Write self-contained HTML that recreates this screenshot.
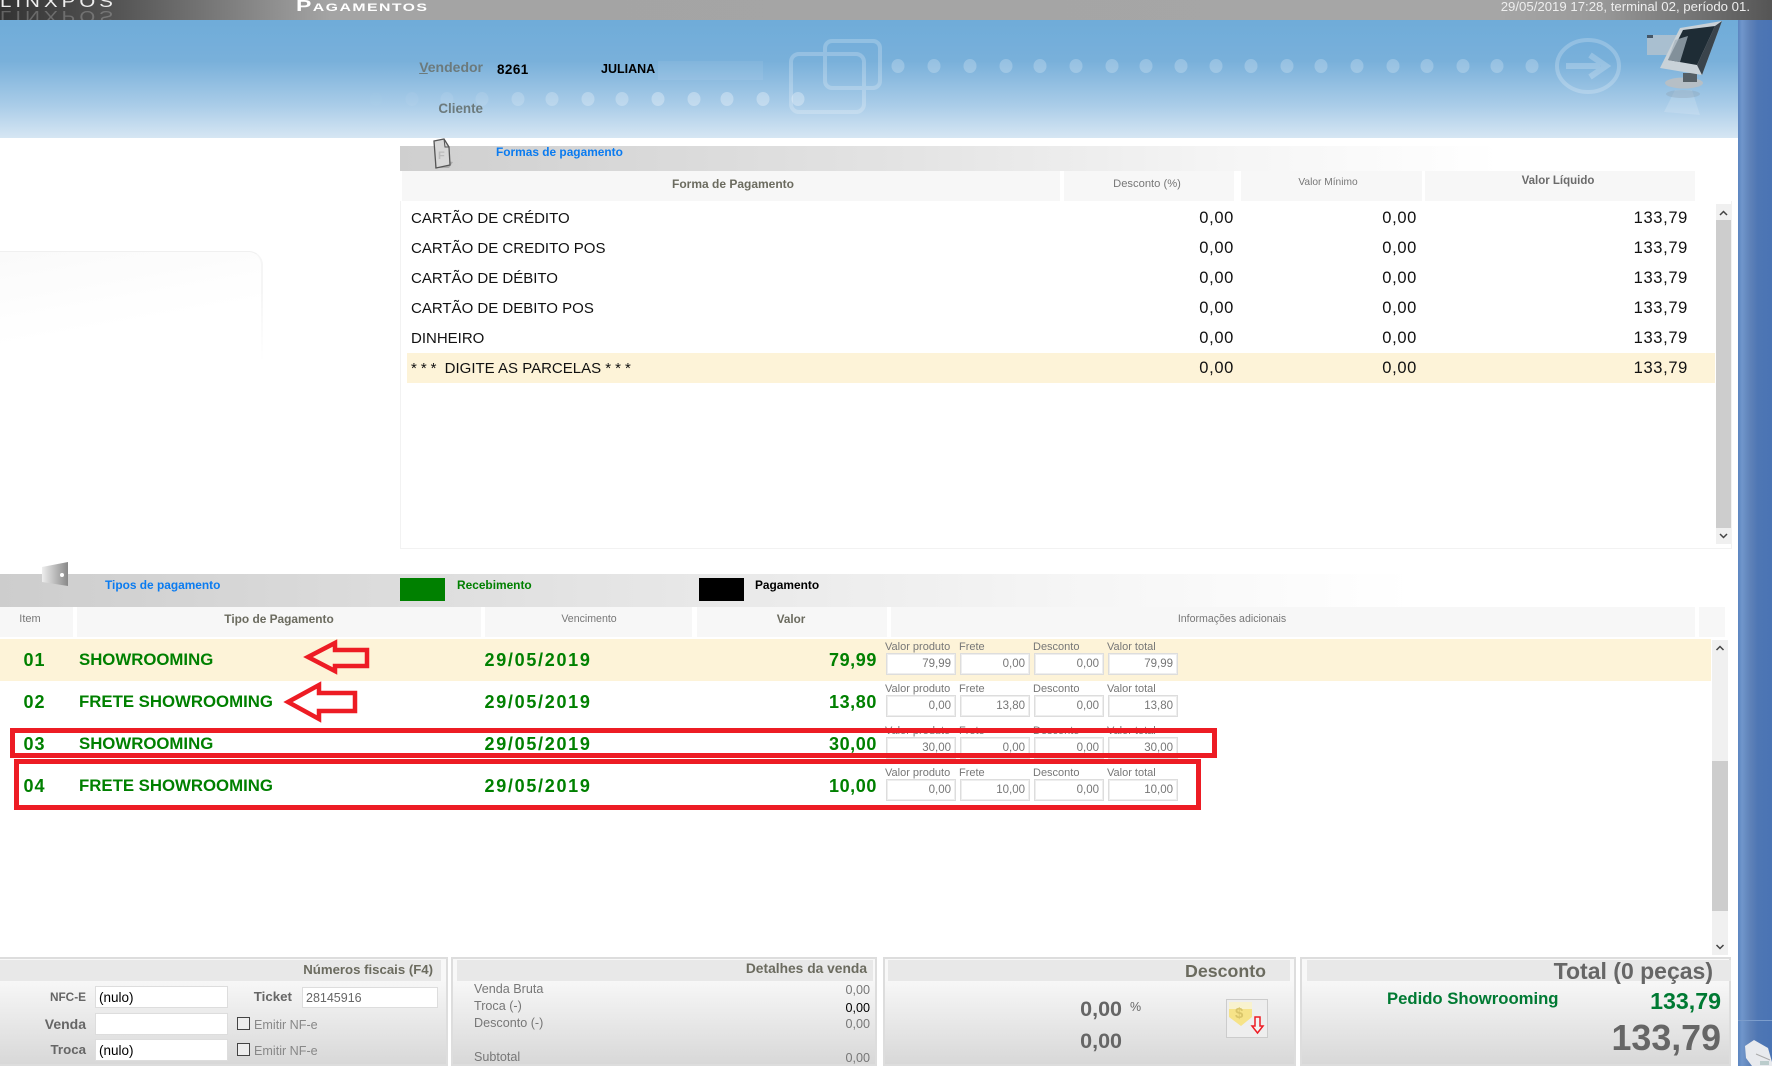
<!DOCTYPE html>
<html lang="pt"><head><meta charset="utf-8"><title>Pagamentos</title>
<style>
html,body{margin:0;padding:0;background:#fff}
#p{position:relative;width:1772px;height:1066px;overflow:hidden;background:#fff;font-family:"Liberation Sans",sans-serif}
#p div{position:absolute}
.t{white-space:nowrap;line-height:1}
.b{font-weight:bold}
.r16{font-size:15px;color:#111}
.n{font-size:16.5px;letter-spacing:.65px;color:#111}
.g{font-size:16.8px;font-weight:bold;color:#008000}
.gd{font-size:18px;font-weight:bold;color:#008000;letter-spacing:1.7px}
.gv{font-size:18px;font-weight:bold;color:#008000;letter-spacing:.6px}
.gi{font-size:18px;font-weight:bold;color:#008000;letter-spacing:1px}
.h{background:#f7f7f7;top:171px;height:30px}
.h2{background:#f7f7f7;top:607px;height:30px}
.c{transform:translateX(-50%)}
.l{font-size:11px;color:#777}
.i{width:68px;height:20px;border:1px solid #ddd;box-shadow:inset 0 0 0 1px #eee;background:#fff}
.v{font-size:11.5px;color:#777}
.pn{top:957px;height:105px;border:2px solid #ddd;background:linear-gradient(#f8f8f8 20px,#d8d8d8)}
.ph{top:960px;height:21px;background:#e8e8e8}
.in{background:#fff;border:1px solid #ddd;box-sizing:border-box}
.lb{font-size:13.3px;font-weight:bold;color:#666}
.sm{font-size:12.6px;color:#777}
.ck{width:11px;height:11px;border:1px solid #444;background:#eee}
</style></head><body><div id="p">

<div style="left:0;top:0;width:1772px;height:20px;background:linear-gradient(90deg,#333 0,#555 120px,#a4a4a4 330px,#a6a6a6 1500px,#999 1600px,#555 1772px)"></div>
<div class="t" style="left:0;top:-7px;font-size:17px;letter-spacing:3.4px;color:#eee;transform:scaleX(1.2);transform-origin:0 0">LINXPOS</div>
<div class="t" style="left:0;top:8px;font-size:17px;letter-spacing:3.4px;color:#bbb;opacity:.35;transform:scaleX(1.2) scaleY(-1);transform-origin:0 50%">LINXPOS</div>
<div class="t b" style="left:296px;top:-1px;font-size:16px;letter-spacing:1px;color:#fff;font-variant:small-caps;transform:scaleX(1.44);transform-origin:0 0">Pagamentos</div>
<div class="t" style="right:22px;top:0;font-size:13.2px;color:#eee">29/05/2019 17:28, terminal 02, período 01.</div>

<div style="left:0;top:20px;width:1738px;height:118px;background:linear-gradient(#6facd9,#79b0da 35%,#a9cce8 72%,#d6e6f3)"></div>
<div style="left:1738px;top:20px;width:34px;height:1046px;background:linear-gradient(90deg,#5b85c0 0,#7096cb 4px,#5f82b8 12px,#4e76b4 20px,#4a74b4)"></div>
<div style="left:1738px;top:1020px;width:34px;height:1px;background:#7c9dcc"></div>

<svg style="position:absolute;left:0;top:0" width="1772" height="1066">
<g fill="#fff">
<g opacity=".22"><ellipse cx="898" cy="66" rx="6.5" ry="7"/><ellipse cx="934" cy="66" rx="6.5" ry="7"/><ellipse cx="970" cy="66" rx="6.5" ry="7"/><ellipse cx="1006" cy="66" rx="6.5" ry="7"/><ellipse cx="1040" cy="66" rx="6.5" ry="7"/><ellipse cx="1076" cy="66" rx="6.5" ry="7"/><ellipse cx="1112" cy="66" rx="6.5" ry="7"/><ellipse cx="1146" cy="66" rx="6.5" ry="7"/><ellipse cx="1181" cy="66" rx="6.5" ry="7"/><ellipse cx="1216" cy="66" rx="6.5" ry="7"/><ellipse cx="1251" cy="66" rx="6.5" ry="7"/><ellipse cx="1287" cy="66" rx="6.5" ry="7"/><ellipse cx="1321" cy="66" rx="6.5" ry="7"/><ellipse cx="1357" cy="66" rx="6.5" ry="7"/><ellipse cx="1393" cy="66" rx="6.5" ry="7"/><ellipse cx="1427" cy="66" rx="6.5" ry="7"/><ellipse cx="1463" cy="66" rx="6.5" ry="7"/><ellipse cx="1497" cy="66" rx="6.5" ry="7"/><ellipse cx="1532" cy="66" rx="6.5" ry="7"/></g>
<ellipse cx="376" cy="99" rx="6.5" ry="7" opacity=".02"/><ellipse cx="412" cy="99" rx="6.5" ry="7" opacity=".05"/><ellipse cx="447" cy="99" rx="6.5" ry="7" opacity=".08"/><ellipse cx="482" cy="99" rx="6.5" ry="7" opacity=".1"/><ellipse cx="518" cy="99" rx="6.5" ry="7" opacity=".18"/><ellipse cx="552" cy="99" rx="6.5" ry="7" opacity=".22"/><ellipse cx="588" cy="99" rx="6.5" ry="7" opacity=".26"/><ellipse cx="622" cy="99" rx="6.5" ry="7" opacity=".26"/><ellipse cx="658" cy="99" rx="6.5" ry="7" opacity=".3"/><ellipse cx="694" cy="99" rx="6.5" ry="7" opacity=".3"/><ellipse cx="727" cy="99" rx="6.5" ry="7" opacity=".3"/><ellipse cx="763" cy="99" rx="6.5" ry="7" opacity=".3"/><ellipse cx="798" cy="99" rx="6.5" ry="7" opacity=".3"/>
<rect x="658" y="61" width="105" height="19" opacity=".07"/>
</g>
<g fill="none" stroke="#fff" stroke-width="4" opacity=".22">
<rect x="791" y="54" width="73" height="58" rx="8"/>
<rect x="825" y="41" width="55" height="47" rx="7"/>
<ellipse cx="1588" cy="66" rx="31" ry="26"/>
</g>
<path d="M1566 66H1600M1590 55L1606 66L1590 77" fill="none" stroke="#fff" stroke-width="6" opacity=".22"/>

<!-- monitor -->
<rect x="1647" y="35" width="30" height="20" fill="#a9bfd0"/>
<rect x="1647" y="35" width="6" height="3" fill="#456"/>
<path d="M1675 90L1692 90L1700 115L1664 112Z" fill="#fff" opacity=".15"/>
<ellipse cx="1683" cy="94" rx="17" ry="4" fill="#8fa5b7" opacity=".4"/>
<ellipse cx="1684" cy="83" rx="19" ry="5.5" fill="#b6bfc6"/>
<rect x="1683" y="73" width="14" height="9" fill="#555f66"/>
<polygon points="1680,28 1722,21 1702,75 1660,68" fill="#c9d2d8"/>
<polygon points="1683,30 1715,26 1697,65 1668,60" fill="#1e2c35"/>
<polygon points="1675,40 1688,36 1680,62 1668,60" fill="#a4b2bc" opacity=".75"/>
<polygon points="1715,26 1722,21 1702,75 1697,65" fill="#3a444c"/>
</svg>

<div style="left:0;top:251px;width:263px;height:110px;box-sizing:border-box;border-top:1px solid #f0f0f0;border-right:2px solid #f5f5f5;border-radius:0 14px 0 0;background:linear-gradient(170deg,#fafafa,#fff 62%)"></div>
<div style="left:258px;top:290px;width:6px;height:72px;background:linear-gradient(rgba(255,255,255,0),#fff)"></div>

<!-- Formas -->
<div style="left:400px;top:146px;width:1100px;height:25px;background:linear-gradient(90deg,#cfcfcf,#e3e3e3 45%,#f5f5f5 75%,#fff)"></div>
<svg style="position:absolute;left:425px;top:135px" width="40" height="38"><path d="M10 24L28 27L24 33L10 33Z" fill="#888" opacity=".5"/><path d="M9 6L19 4L24 12L25 30L11 33Z" fill="#d8d8d8" stroke="#555" stroke-width="1.3"/><path d="M19 4L20 12L24 12" fill="none" stroke="#555"/><text x="13" y="24" font-size="11" fill="#bbb" font-family="Liberation Sans" font-weight="bold">F</text></svg>
<div class="t b" style="left:496px;top:146.500px;font-size:11.9px;color:#0a7bf0">Formas de pagamento</div>
<div class="h" style="left:402px;width:658px"></div>
<div class="h" style="left:1064px;width:170px"></div>
<div class="h" style="left:1241px;width:181px"></div>
<div class="h" style="left:1425px;width:270px"></div>
<div class="t b c" style="left:733px;top:178px;font-size:12px;color:#6b6b5f">Forma de Pagamento</div>
<div class="t c" style="left:1147px;top:179px;font-size:11.2px;color:#777">Desconto (%)</div>
<div class="t c" style="left:1328px;top:178px;font-size:10.2px;color:#777">Valor Mínimo</div>
<div class="t b c" style="left:1558px;top:176px;font-size:11.5px;color:#6b6b6b">Valor Líquido</div>

<div style="left:400px;top:201px;width:1332px;height:348px;box-sizing:border-box;border:1px solid #f2f2f2;border-top:0"></div>
<div style="left:407px;top:353px;width:1308px;height:30px;background:#fdf3d8"></div>
<div style="left:1716px;top:204px;width:15px;height:340px;background:#f0f0f0"></div>
<div style="left:1716px;top:220px;width:15px;height:308px;background:#cdcdcd"></div>
<svg style="position:absolute;left:1716px;top:204px" width="15" height="340"><path d="M4 11L7.500 7.500L11 11" fill="none" stroke="#444" stroke-width="1.500"/><path d="M4 330L7.500 333.500L11 330" fill="none" stroke="#444" stroke-width="1.500"/></svg>

<div class="t r16" style="left:411px;top:211px">CARTÃO DE CRÉDITO</div>
<div class="t r16" style="left:411px;top:241px">CARTÃO DE CREDITO POS</div>
<div class="t r16" style="left:411px;top:271px">CARTÃO DE DÉBITO</div>
<div class="t r16" style="left:411px;top:301px">CARTÃO DE DEBITO POS</div>
<div class="t r16" style="left:411px;top:331px">DINHEIRO</div>
<div class="t r16" style="left:411px;top:361px"><span style="letter-spacing:4px">***</span> DIGITE AS PARCELAS <span style="letter-spacing:4px">***</span></div>
<div class="t n" style="right:538px;top:210px">0,00</div><div class="t n" style="right:355px;top:210px">0,00</div><div class="t n" style="right:84px;top:210px">133,79</div>
<div class="t n" style="right:538px;top:240px">0,00</div><div class="t n" style="right:355px;top:240px">0,00</div><div class="t n" style="right:84px;top:240px">133,79</div>
<div class="t n" style="right:538px;top:270px">0,00</div><div class="t n" style="right:355px;top:270px">0,00</div><div class="t n" style="right:84px;top:270px">133,79</div>
<div class="t n" style="right:538px;top:300px">0,00</div><div class="t n" style="right:355px;top:300px">0,00</div><div class="t n" style="right:84px;top:300px">133,79</div>
<div class="t n" style="right:538px;top:330px">0,00</div><div class="t n" style="right:355px;top:330px">0,00</div><div class="t n" style="right:84px;top:330px">133,79</div>
<div class="t n" style="right:538px;top:360px">0,00</div><div class="t n" style="right:355px;top:360px">0,00</div><div class="t n" style="right:84px;top:360px">133,79</div>

<!-- Banner labels -->
<div class="t b" style="right:1289px;top:60px;font-size:14px;color:#6c7a7c"><u>V</u>endedor</div>
<div class="t b" style="left:497px;top:63px;font-size:13.5px;letter-spacing:.4px;color:#000">8261</div>
<div class="t b" style="left:601px;top:63px;font-size:12.5px;color:#000">JULIANA</div>
<div class="t b" style="right:1289px;top:102px;font-size:13.4px;color:#6c7a7c">Cliente</div>

<!-- Tipos -->
<div style="left:0;top:574px;width:1412px;height:33px;background:linear-gradient(90deg,#cdcdcd,#e3e3e3 40%,#f5f5f5 75%,#fff)"></div>
<svg style="position:absolute;left:40px;top:560px" width="40" height="30"><defs><linearGradient id="m" x1="0" x2="1"><stop offset="0" stop-color="#eee"/><stop offset="1" stop-color="#888"/></linearGradient></defs><polygon points="2,7 28,2 28,26 2,22" fill="url(#m)"/><circle cx="22" cy="15" r="2" fill="#fff"/></svg>
<div class="t b" style="left:105px;top:580px;font-size:11.9px;color:#0a7bf0">Tipos de pagamento</div>
<div style="left:400px;top:578px;width:45px;height:23px;background:#008000"></div>
<div class="t b" style="left:457px;top:580px;font-size:11.9px;color:#008000">Recebimento</div>
<div style="left:699px;top:578px;width:45px;height:23px;background:#000"></div>
<div class="t b" style="left:755px;top:580px;font-size:11.9px;color:#000">Pagamento</div>

<div class="h2" style="left:0;width:73px"></div>
<div class="h2" style="left:77px;width:404px"></div>
<div class="h2" style="left:485px;width:207px"></div>
<div class="h2" style="left:697px;width:190px"></div>
<div class="h2" style="left:891px;width:804px"></div>
<div class="h2" style="left:1699px;width:26px"></div>
<div class="t c" style="left:30px;top:613.500px;font-size:11px;color:#777">Item</div>
<div class="t b c" style="left:279px;top:613.500px;font-size:11.9px;color:#6b6b5f">Tipo de Pagamento</div>
<div class="t c" style="left:589px;top:614px;font-size:10.6px;color:#777">Vencimento</div>
<div class="t b c" style="left:791px;top:614px;font-size:11.7px;color:#6b6b5f">Valor</div>
<div class="t c" style="left:1232px;top:614px;font-size:10.6px;color:#777">Informações adicionais</div>

<div style="left:0;top:639px;width:1711px;height:42px;background:#fdf3d8"></div>
<div style="left:1712px;top:640px;width:16px;height:315px;background:#f0f0f0"></div>
<div style="left:1712px;top:761px;width:16px;height:150px;background:#cdcdcd"></div>
<svg style="position:absolute;left:1712px;top:640px" width="16" height="315"><path d="M4.500 10L8 6.500L11.500 10" fill="none" stroke="#444" stroke-width="1.500"/><path d="M4.500 305L8 308.500L11.500 305" fill="none" stroke="#444" stroke-width="1.500"/></svg>

<div class="t gi" style="left:23.500px;top:651px">01</div><div class="t g" style="left:79px;top:652px">SHOWROOMING</div><div class="t gd" style="left:484.500px;top:651px">29/05/2019</div><div class="t gv" style="right:895px;top:651px">79,99</div>
<div class="t gi" style="left:23.500px;top:693px">02</div><div class="t g" style="left:79px;top:694px">FRETE SHOWROOMING</div><div class="t gd" style="left:484.500px;top:693px">29/05/2019</div><div class="t gv" style="right:895px;top:693px">13,80</div>
<div class="t gi" style="left:23.500px;top:735px">03</div><div class="t g" style="left:79px;top:736px">SHOWROOMING</div><div class="t gd" style="left:484.500px;top:735px">29/05/2019</div><div class="t gv" style="right:895px;top:735px">30,00</div>
<div class="t gi" style="left:23.500px;top:777px">04</div><div class="t g" style="left:79px;top:778px">FRETE SHOWROOMING</div><div class="t gd" style="left:484.500px;top:777px">29/05/2019</div><div class="t gv" style="right:895px;top:777px">10,00</div>

<!-- row 1 -->
<div class="t l" style="left:885px;top:642px">Valor produto</div><div class="t l" style="left:959px;top:642px">Frete</div><div class="t l" style="left:1033px;top:642px">Desconto</div><div class="t l" style="left:1107px;top:642px">Valor total</div>
<div class="i" style="left:886px;top:653px"></div><div class="i" style="left:960px;top:653px"></div><div class="i" style="left:1034px;top:653px"></div><div class="i" style="left:1108px;top:653px"></div>
<div class="t v" style="right:821px;top:659px">79,99</div><div class="t v" style="right:747px;top:659px">0,00</div><div class="t v" style="right:673px;top:659px">0,00</div><div class="t v" style="right:599px;top:659px">79,99</div>
<!-- row 2 -->
<div class="t l" style="left:885px;top:684px">Valor produto</div><div class="t l" style="left:959px;top:684px">Frete</div><div class="t l" style="left:1033px;top:684px">Desconto</div><div class="t l" style="left:1107px;top:684px">Valor total</div>
<div class="i" style="left:886px;top:695px"></div><div class="i" style="left:960px;top:695px"></div><div class="i" style="left:1034px;top:695px"></div><div class="i" style="left:1108px;top:695px"></div>
<div class="t v" style="right:821px;top:701px">0,00</div><div class="t v" style="right:747px;top:701px">13,80</div><div class="t v" style="right:673px;top:701px">0,00</div><div class="t v" style="right:599px;top:701px">13,80</div>
<!-- row 3 -->
<div class="t l" style="left:885px;top:726px">Valor produto</div><div class="t l" style="left:959px;top:726px">Frete</div><div class="t l" style="left:1033px;top:726px">Desconto</div><div class="t l" style="left:1107px;top:726px">Valor total</div>
<div class="i" style="left:886px;top:737px"></div><div class="i" style="left:960px;top:737px"></div><div class="i" style="left:1034px;top:737px"></div><div class="i" style="left:1108px;top:737px"></div>
<div class="t v" style="right:821px;top:743px">30,00</div><div class="t v" style="right:747px;top:743px">0,00</div><div class="t v" style="right:673px;top:743px">0,00</div><div class="t v" style="right:599px;top:743px">30,00</div>
<!-- row 4 -->
<div class="t l" style="left:885px;top:768px">Valor produto</div><div class="t l" style="left:959px;top:768px">Frete</div><div class="t l" style="left:1033px;top:768px">Desconto</div><div class="t l" style="left:1107px;top:768px">Valor total</div>
<div class="i" style="left:886px;top:779px"></div><div class="i" style="left:960px;top:779px"></div><div class="i" style="left:1034px;top:779px"></div><div class="i" style="left:1108px;top:779px"></div>
<div class="t v" style="right:821px;top:785px">0,00</div><div class="t v" style="right:747px;top:785px">10,00</div><div class="t v" style="right:673px;top:785px">0,00</div><div class="t v" style="right:599px;top:785px">10,00</div>

<!-- red annotations -->
<svg style="position:absolute;left:0;top:0" width="1772" height="1066">
<g fill="none" stroke="#ed1c24">
<rect x="12.500" y="730.500" width="1202" height="25" stroke-width="5"/>
<rect x="16.500" y="761.500" width="1182" height="46" stroke-width="5"/>
<path d="M308 657L335 643V650H367V666H335V671Z" stroke-width="4.500"/>
<path d="M288 702L319 685V693H355V711H319V719Z" stroke-width="4.500"/>
</g>
</svg>

<!-- bottom panels -->
<div class="pn" style="left:-2px;width:446px"></div>
<div class="pn" style="left:451px;width:422px"></div>
<div class="pn" style="left:883px;width:409px"></div>
<div class="pn" style="left:1300px;width:427px"></div>
<div class="ph" style="left:0;width:441px"></div>
<div class="ph" style="left:457px;width:416px"></div>
<div class="ph" style="left:888px;width:402px"></div>
<div class="ph" style="left:1307px;width:424px"></div>

<div class="t b" style="right:1339px;top:963px;font-size:13.2px;color:#6b6b5f">Números fiscais (F4)</div>
<div class="lb t" style="right:1686px;top:992px;font-size:11.8px">NFC-E</div>
<div class="in" style="left:95px;top:986px;width:133px;height:22px"></div>
<div class="t" style="left:99px;top:991px;font-size:13.5px;color:#000">(nulo)</div>
<div class="lb t" style="right:1480px;top:990px">Ticket</div>
<div class="in" style="left:302px;top:987px;width:136px;height:21px"></div>
<div class="t" style="left:306px;top:992px;font-size:12.5px;color:#666">28145916</div>
<div class="lb t" style="right:1686px;top:1017px;font-size:14px">Venda</div>
<div class="in" style="left:95px;top:1013px;width:133px;height:22px"></div>
<div class="ck" style="left:237px;top:1017px"></div>
<div class="t sm" style="left:254px;top:1019px;color:#888">Emitir NF-e</div>
<div class="lb t" style="right:1686px;top:1043px">Troca</div>
<div class="in" style="left:95px;top:1039px;width:133px;height:22px"></div>
<div class="t" style="left:99px;top:1044px;font-size:13.5px;color:#000">(nulo)</div>
<div class="ck" style="left:237px;top:1043px"></div>
<div class="t sm" style="left:254px;top:1045px;color:#888">Emitir NF-e</div>

<div class="t b" style="right:905px;top:962px;font-size:13.8px;color:#6b6b5f">Detalhes da venda</div>
<div class="t sm" style="left:474px;top:983px">Venda Bruta</div><div class="t sm" style="right:902px;top:984px">0,00</div>
<div class="t sm" style="left:474px;top:1000px">Troca (-)</div><div class="t sm" style="right:902px;top:1002px;color:#000">0,00</div>
<div class="t sm" style="left:474px;top:1017px">Desconto (-)</div><div class="t sm" style="right:902px;top:1018px">0,00</div>
<div class="t sm" style="left:474px;top:1051px">Subtotal</div><div class="t sm" style="right:902px;top:1052px">0,00</div>

<div class="t b" style="right:506px;top:963px;font-size:17.8px;color:#6b6b5f">Desconto</div>
<div class="t b" style="right:650px;top:999px;font-size:21.5px;color:#666">0,00</div>
<div class="t" style="left:1130px;top:1001px;font-size:12.5px;color:#666">%</div>
<div class="t b" style="right:650px;top:1031px;font-size:21.5px;color:#666">0,00</div>
<svg style="position:absolute;left:1226px;top:999px" width="42" height="40">
<rect x=".5" y=".5" width="41" height="38" fill="#eee" stroke="#ccc"/>
<path d="M3 3H26V18L15 27L3 18Z" fill="#f6e388"/>
<path d="M3 3H26V10H3Z" fill="#f8f2cf"/>
<text x="9" y="19" font-size="15" font-weight="bold" fill="#d9c56a" font-family="Liberation Sans">$</text>
<path d="M29 18H34V27H37L31.500 34L26 27H29Z" fill="#f4f4f4" stroke="#ed1c24" stroke-width="1.500"/>
</svg>

<div class="t b" style="right:59px;top:960px;font-size:23px;color:#666">Total (0 peças)</div>
<div class="t b" style="left:1387px;top:991px;font-size:16.7px;color:#007a33">Pedido Showrooming</div>
<div class="t b" style="right:51px;top:990px;font-size:23.2px;color:#007a33">133,79</div>
<div class="t b" style="right:51px;top:1021px;font-size:35.8px;color:#666">133,79</div>

<svg style="position:absolute;left:1744px;top:1040px" width="28" height="26">
<path d="M1 6L10 0L24 8L28 22V26H8L2 18Z" fill="#e8eaee"/>
<path d="M12 14L26 20" stroke="#aaa"/><rect x="16" y="21" width="9" height="4" fill="#bcc"/>
</svg>
</div></body></html>
